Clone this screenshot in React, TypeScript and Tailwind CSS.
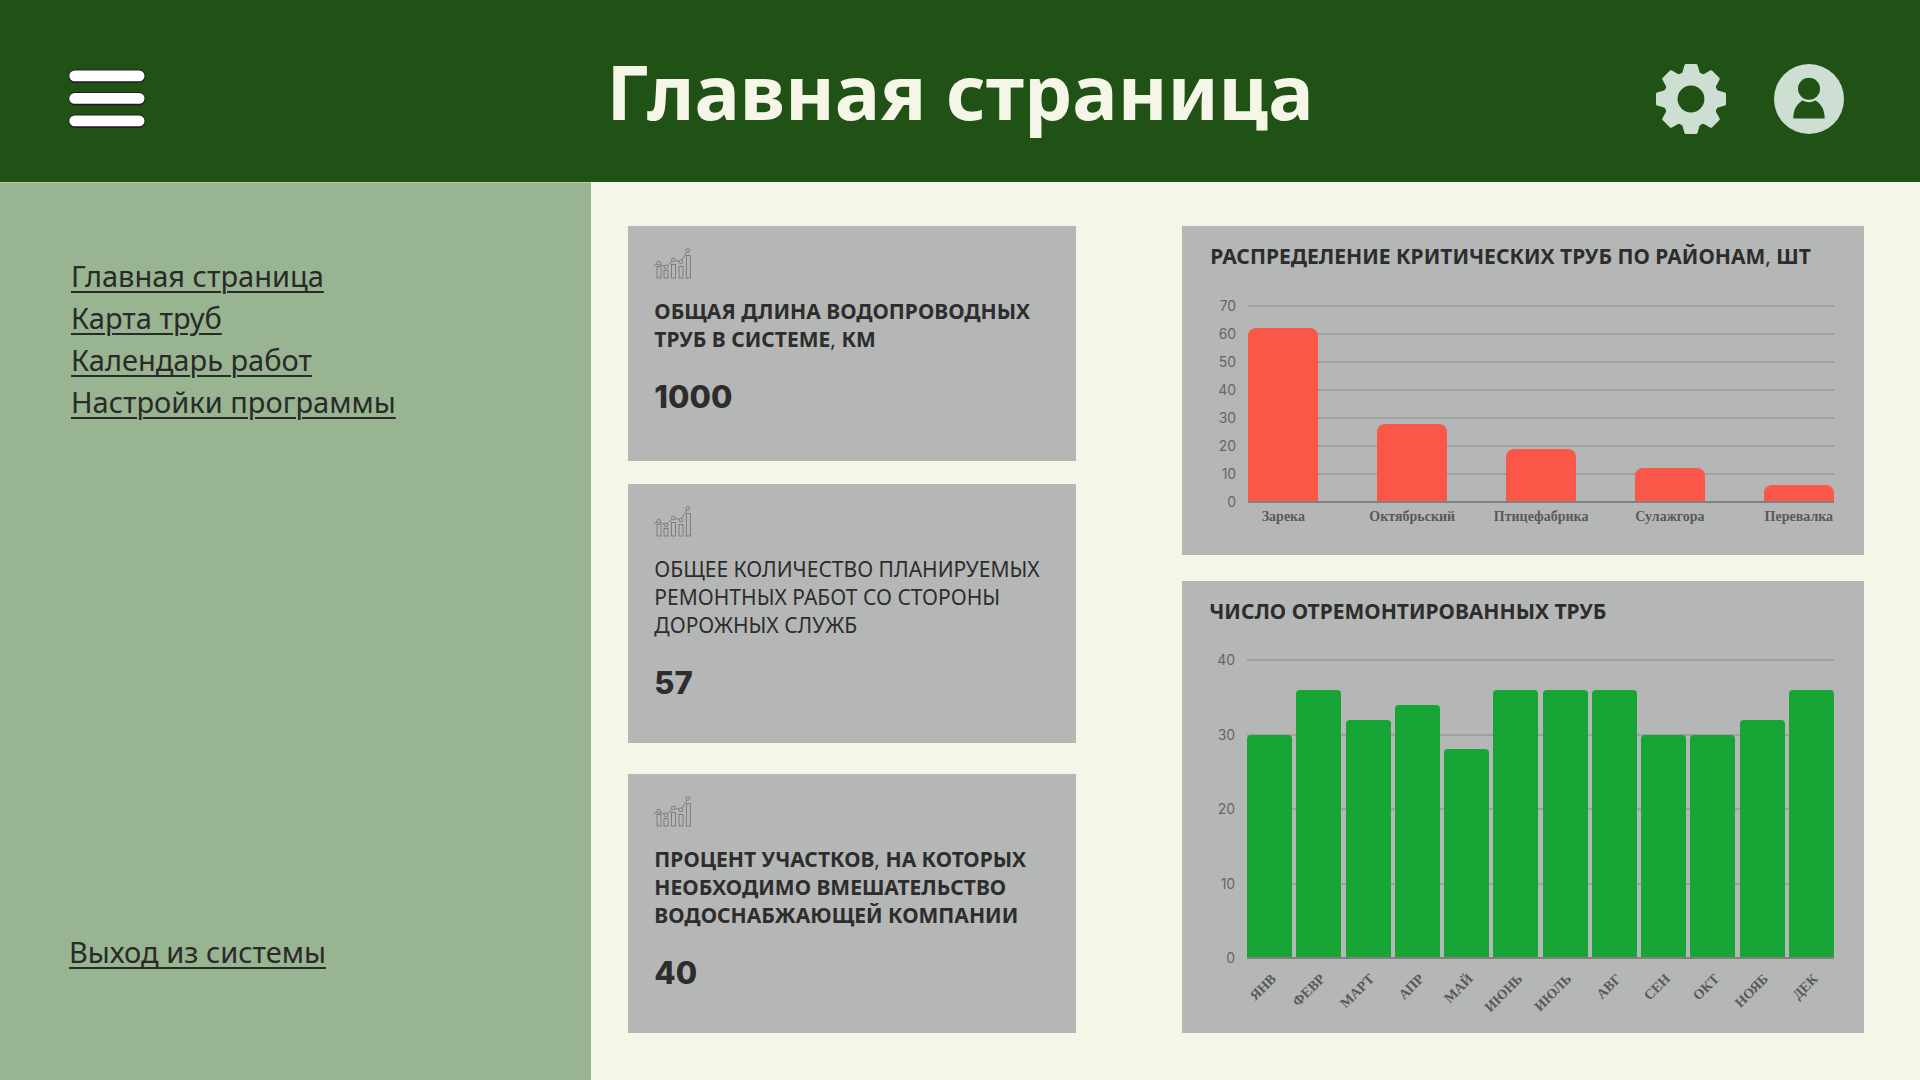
import React from "react";

const teethAngles = [0, 45, 90, 135, 180, 225, 270, 315];

function MenuIcon() {
  return (
    <svg viewBox="0 0 78 60" className="h-[60px] w-[78px]" aria-hidden="true">
      {[1, 23.5, 46].map((y) => (
        <g key={y}>
          <rect x="0.5" y={y - 0.5} width="77" height="13.5" rx="6.5" fill="#231f20" />
          <rect x="1.3" y={y + 0.5} width="75.2" height="10.8" rx="5.4" fill="#ffffff" />
        </g>
      ))}
    </svg>
  );
}

function GearIcon() {
  return (
    <svg viewBox="-35 -35 70 70" className="size-[70px]" aria-hidden="true">
      <circle r="27.5" fill="#cdded2" />
      {teethAngles.map((a) => (
        <path
          key={a}
          d="M-12 -24 Q-9 -25 -8.5 -27 L-6.5 -34 Q-6.2 -35 -5 -35 H5 Q6.2 -35 6.5 -34 L8.5 -27 Q9 -25 12 -24 Z"
          transform={`rotate(${a})`}
          fill="#cdded2"
        />
      ))}
      <circle r="13.4" fill="#205115" />
    </svg>
  );
}

function UserIcon() {
  return (
    <svg viewBox="0 0 70 70" className="size-[70px]" aria-hidden="true">
      <circle cx="35" cy="35" r="35" fill="#cdded2" />
      <circle cx="35" cy="24.7" r="11" fill="#205115" />
      <path d="M19.3 54.5 C19.3 45 23.5 39.5 28.5 36.6 Q35 39.8 41.5 36.6 C46.5 39.5 50.7 45 50.7 54.5 Z" fill="#205115" />
    </svg>
  );
}

function TrendIcon() {
  const bars = [
    [3, 18.5],
    [10, 22.5],
    [17.5, 16.5],
    [25, 18.5],
    [32.3, 7.5],
  ];
  const nodes = [
    [4.7, 15.2],
    [12, 19],
    [19.4, 12],
    [26.9, 13.8],
    [33.8, 2.4],
  ];
  return (
    <svg viewBox="0 0 37 31" className="h-[31px] w-[37px]" fill="none" stroke="#6e706f" strokeWidth="0.8" aria-hidden="true">
      {bars.map(([x, y]) => (
        <rect key={x} x={x} y={y} width="4" height={30 - y} />
      ))}
      <path d="M0 17.6 L3 16.4 M6.2 16.5 L10.4 18 M13.3 17.5 L18 13.4 M21.2 12.5 L25 13.3 M27.9 12.2 L32.8 4" />
      {nodes.map(([x, y]) => (
        <circle key={x} cx={x} cy={y} r="1.9" />
      ))}
    </svg>
  );
}

const navLinks = ["Главная страница", "Карта труб", "Календарь работ", "Настройки программы"];

function NavLink({ children }: { children: React.ReactNode }) {
  return (
    <a href="#" className="text-[29px] leading-[42px] text-[#2a2a2a] underline decoration-2 underline-offset-4">
      {children}
    </a>
  );
}

function StatCard({ title, value, className }: { title: React.ReactNode; value: string; className: string }) {
  return (
    <section className={`bg-[#b5b7b6] px-[26px] pt-[22px] text-[#2d2d2d] ${className}`}>
      <TrendIcon />
      <h2 className="mt-[18px] text-[21px] leading-7">{title}</h2>
      <p className="mt-6 font-['Inter'] text-[31px] leading-10 font-extrabold">{value}</p>
    </section>
  );
}

function Comma() {
  return <span className="font-normal">,</span>;
}

type Bar = { label: string; value: number };

const districts: Bar[] = [
  { label: "Зарека", value: 62 },
  { label: "Октябрьский", value: 28 },
  { label: "Птицефабрика", value: 19 },
  { label: "Сулажгора", value: 12 },
  { label: "Перевалка", value: 6 },
];

const months: Bar[] = [
  { label: "ЯНВ", value: 30 },
  { label: "ФЕВР", value: 36 },
  { label: "МАРТ", value: 32 },
  { label: "АПР", value: 34 },
  { label: "МАЙ", value: 28 },
  { label: "ИЮНЬ", value: 36 },
  { label: "ИЮЛЬ", value: 36 },
  { label: "АВГ", value: 36 },
  { label: "СЕН", value: 30 },
  { label: "ОКТ", value: 30 },
  { label: "НОЯБ", value: 32 },
  { label: "ДЕК", value: 36 },
];

function Plot({
  ticks,
  bars,
  max,
  height,
  barClass,
}: {
  ticks: number[];
  bars: Bar[];
  max: number;
  height: string;
  barClass: string;
}) {
  return (
    <div className={`grid grid-cols-[26px_1fr] gap-x-3 ${height}`}>
      <div className="flex flex-col justify-between text-right font-['Inter'] text-sm text-[#666666]">
        {ticks.map((t) => (
          <span key={t} className="flex h-0 items-center justify-end">
            {t}
          </span>
        ))}
      </div>
      <div className="grid">
        <div className="col-start-1 row-start-1 flex flex-col justify-between">
          {ticks.map((t) => (
            <span key={t} className="flex h-0 items-center">
              <span className="h-[2px] w-full shrink-0 bg-[#9fa1a0]" />
            </span>
          ))}
        </div>
        <div className="col-start-1 row-start-1 flex items-end justify-between">
          {bars.map((b) => (
            <div key={b.label} className={barClass} style={{ height: `${(b.value / max) * 100}%` }} />
          ))}
        </div>
        <div className="col-start-1 row-start-1 h-[2px] translate-y-px self-end bg-[#808281]" />
      </div>
    </div>
  );
}

export default function App() {
  return (
    <div className="flex min-h-screen flex-col bg-[#f6f6e8] font-['Noto_Sans',sans-serif]">
      <header className="grid min-h-[182px] grid-cols-[1fr_auto_1fr] items-center bg-[#205115] px-[68px]">
        <button type="button" aria-label="Меню" className="justify-self-start pt-4">
          <MenuIcon />
        </button>
        <h1 className="text-[76px] leading-none font-bold text-[#f6f6e8]">Главная страница</h1>
        <div className="flex gap-12 justify-self-end pt-4 pr-2">
          <button type="button" aria-label="Настройки">
            <GearIcon />
          </button>
          <button type="button" aria-label="Профиль">
            <UserIcon />
          </button>
        </div>
      </header>
      <div className="flex flex-1">
        <aside className="flex w-[30.8%] shrink-0 flex-col justify-between border-t border-[#bccbae] bg-[#98b491] pt-[72px] pb-[107px]">
          <nav className="flex flex-col items-start pl-[71px]">
            {navLinks.map((l) => (
              <NavLink key={l}>{l}</NavLink>
            ))}
          </nav>
          <div className="pl-[69px]">
            <NavLink>Выход из системы</NavLink>
          </div>
        </aside>
        <main className="grid flex-1 grid-cols-[448fr_682fr] items-start gap-x-[106px] pt-11 pr-14 pb-[47px] pl-[37px]">
          <div>
            <StatCard
              className="pb-[44px] font-bold"
              title={
                <>
                  ОБЩАЯ ДЛИНА ВОДОПРОВОДНЫХ
                  <br />
                  ТРУБ В СИСТЕМЕ<Comma /> КМ
                </>
              }
              value="1000"
            />
            <StatCard
              className="mt-[23px] pb-[40px]"
              title={
                <>
                  ОБЩЕЕ КОЛИЧЕСТВО ПЛАНИРУЕМЫХ
                  <br />
                  РЕМОНТНЫХ РАБОТ СО СТОРОНЫ
                  <br />
                  ДОРОЖНЫХ СЛУЖБ
                </>
              }
              value="57"
            />
            <StatCard
              className="mt-[31px] pb-[40px] font-bold"
              title={
                <>
                  ПРОЦЕНТ УЧАСТКОВ<Comma /> НА КОТОРЫХ
                  <br />
                  НЕОБХОДИМО ВМЕШАТЕЛЬСТВО
                  <br />
                  ВОДОСНАБЖАЮЩЕЙ КОМПАНИИ
                </>
              }
              value="40"
            />
          </div>
          <div>
            <section className="bg-[#b5b7b6] pt-[16px] pr-[30px] pb-[28px] pl-[28px]">
              <h2 className="mb-[36px] text-[21px] leading-7 font-bold text-[#2d2d2d]">
                РАСПРЕДЕЛЕНИЕ КРИТИЧЕСКИХ ТРУБ ПО РАЙОНАМ<Comma /> ШТ
              </h2>
              <Plot
                ticks={[70, 60, 50, 40, 30, 20, 10, 0]}
                bars={districts}
                max={70}
                height="h-[196px]"
                barClass="w-[12%] rounded-t-lg bg-[#fa5748]"
              />
              <div className="mt-1 flex justify-between pl-[38px] font-['Liberation_Serif',serif] text-sm leading-[21px] font-bold text-[#595959]">
                {districts.map((d) => (
                  <span key={d.label} className="flex w-[12%] justify-center">
                    {d.label}
                  </span>
                ))}
              </div>
            </section>
            <section className="mt-[26px] bg-[#b5b7b6] pt-[16px] pr-[30px] pb-[43px] pl-[27px]">
              <h2 className="mb-[35px] text-[21px] leading-7 font-bold text-[#2d2d2d]">
                ЧИСЛО ОТРЕМОНТИРОВАННЫХ ТРУБ
              </h2>
              <Plot
                ticks={[40, 30, 20, 10, 0]}
                bars={months}
                max={40}
                height="h-[298px]"
                barClass="w-[45px] rounded-t bg-[#17a535]"
              />
              <div className="mt-[11px] flex justify-between pl-[38px] font-['Liberation_Serif',serif] text-sm leading-[21px] font-bold text-[#595959]">
                {months.map((m) => (
                  <span key={m.label} className="flex w-[45px] justify-end pr-[26px]">
                    <span className="origin-top-right -rotate-45">{m.label}</span>
                  </span>
                ))}
              </div>
            </section>
          </div>
        </main>
      </div>
    </div>
  );
}
